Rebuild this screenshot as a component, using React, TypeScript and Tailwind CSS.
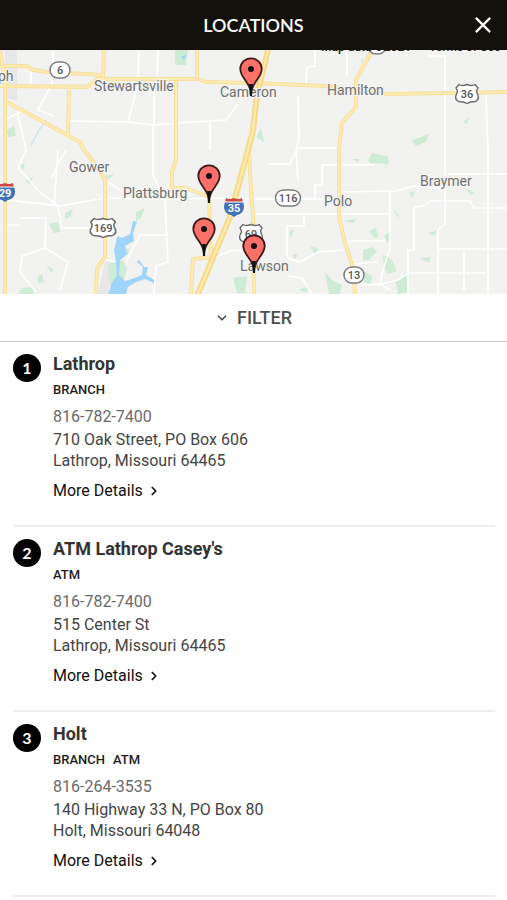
import { ChevronDown, ChevronRight } from "lucide-react";

type Location = {
  name: string;
  types: string[];
  phone: string;
  street: string;
  city: string;
};

const locations: Location[] = [
  {
    name: "Lathrop",
    types: ["BRANCH"],
    phone: "816-782-7400",
    street: "710 Oak Street, PO Box 606",
    city: "Lathrop, Missouri 64465",
  },
  {
    name: "ATM Lathrop Casey's",
    types: ["ATM"],
    phone: "816-782-7400",
    street: "515 Center St",
    city: "Lathrop, Missouri 64465",
  },
  {
    name: "Holt",
    types: ["BRANCH", "ATM"],
    phone: "816-264-3535",
    street: "140 Highway 33 N, PO Box 80",
    city: "Holt, Missouri 64048",
  },
];

const minorRoads = [
  "M139 50L138 78M158 50L157 78M53 50L52 84L38 110L54 116",
  "M138 84L128 122L70 121M128 122L154 125L176 123L226 120L238 104",
  "M154 84V125M153 125V150M210 120V150M31 72V84",
  "M17 110L26 150L18 168L40 192L58 206M58 150L54 206",
  "M8 200L60 206L105 198L165 199L240 198L253 199H330",
  "M20 218L46 218L45 248L22 256L20 272L36 292M45 248L68 262L60 290",
  "M58 206L62 228L105 228M52 178L60 160L66 150",
  "M153 150L153 175L165 200L168 262L156 266L154 294",
  "M168 235H140L126 262M115 262L100 258M130 200L120 190L105 180",
  "M216 257L232 250L253 252M253 214H390M253 199H315V185H322V165H375",
  "M298 95L299 140L296 150L298 180M298 148H340",
  "M306 84L307 67L315 66V50M347 50V76",
  "M445 56V131M428 56H445V175M445 189V224L438 230V294",
  "M486 95L488 150V294M414 207L424 206L430 201H470L474 208H507",
  "M340 192L396 191L414 186L440 188M448 174H507",
  "M414 207V250H408V294M390 192V248L383 270L380 284L390 290",
  "M304 220V214M286 226H304V216M287 226V258L300 262L318 252L343 250",
  "M346 241H385M354 264L378 262M288 276L302 278L312 294",
  "M362 285L382 284L398 280L408 273H486M464 252V291M438 249H507",
  "M5 120L20 112M5 225H20M268 164H290L295 153",
];

const majorRoads = [
  "M0 50L5 80V294",
  "M0 66H27L33 70L48 72L104 75",
  "M104 50L103 79M197 50V80",
  "M69 90L68 137",
  "M5 101L80 142L84 150L97 167L105 180V257L97 268L96 294",
  "M176 81V160L172 172V188H186L209 197M209 200L211 257L193 259L191 294",
  "M372 50L367 60L356 80V107L342 123L339 150V217L345 243L353 268L355 294",
  "M249 150L251 190L253 215L254 294",
  "M0 86L87 87L97 79H198L206 82L253 83L326 86L387 94L507 92",
];

const interstate = "M268 50L257 95L253 130L248 150L230 217L197 296";

const parks = [
  "M175 50H188L186 65H175Z",
  "M49 224L58 222L60 232L54 233Z",
  "M65 213L73 209L71 216L65 219Z",
  "M38 276L42 274L44 282L38 283ZM46 265L54 270L51 272Z",
  "M22 288L34 287L33 294H18Z",
  "M108 264L122 260L127 268L124 279L110 286Z",
  "M122 250L129 248L128 255L121 256Z",
  "M136 212L145 208L141 218L136 221Z",
  "M25 181L33 177L30 184ZM20 165L25 164L23 170Z",
  "M7 130L14 126L16 136L8 137ZM102 176L114 174L109 179Z",
  "M412 140L421 137L429 134L426 142L416 146Z",
  "M256 137L261 128L264 142Z",
  "M463 122L469 117L467 124ZM408 63L412 61ZM361 61L364 57L362 64Z",
  "M368 160L372 153L380 155L388 156L389 164L370 163Z",
  "M233 278L247 276L245 293H237Z",
  "M363 250L372 247L377 251L369 260H363Z",
  "M383 255L392 260L397 271L388 274L384 267Z",
  "M325 272L332 280L342 285L340 294H329Z",
  "M365 272L372 276L370 285L364 281ZM396 282L406 272L409 292L398 294Z",
  "M394 208L400 218L396 215ZM289 232L294 229L291 238Z",
  "M369 231L376 228L378 238L374 238ZM384 236L391 231L388 243Z",
  "M420 258L431 257L429 263ZM428 233L437 231L434 236Z",
  "M409 193L415 191L412 198ZM464 188L474 192L472 195Z",
  "M343 221L356 219L353 223ZM353 159L360 159L357 162Z",
  "M310 246L319 249L315 254ZM293 254L298 255L294 259Z",
  "M210 255L216 259L212 261ZM299 289L310 287L306 293Z",
];

const places = [
  { name: "ph", x: -2, y: 81 },
  { name: "Stewartsville", x: 94, y: 91 },
  { name: "Cameron", x: 220, y: 97 },
  { name: "Hamilton", x: 327, y: 95 },
  { name: "Gower", x: 69, y: 172 },
  { name: "Plattsburg", x: 123, y: 198 },
  { name: "Polo", x: 324, y: 206 },
  { name: "Braymer", x: 420, y: 186 },
  { name: "Lawson", x: 240, y: 271 },
];

function RouteBadge({ x, y, w, label }: { x: number; y: number; w: number; label: string }) {
  return (
    <g transform={`translate(${x} ${y})`}>
      <rect x={-w / 2} y="-8" width={w} height="16" rx="8" fill="#fff" stroke="#7d7d7d" strokeWidth="1.5" />
      <text y="4" textAnchor="middle" fontSize="11" fontWeight="500" fill="#555">
        {label}
      </text>
    </g>
  );
}

function UsShield({ x, y, w, label }: { x: number; y: number; w: number; label: string }) {
  const scale = w / 24;
  return (
    <g transform={`translate(${x} ${y})`}>
      <path
        transform={`scale(${scale} 1)`}
        d="M-8 -9.5Q-5 -7.5 0 -9.5Q5 -7.5 8 -9.5L11 -6Q8.5 -3 10.5 0Q13 5 8.5 7.5Q3 7.5 0 9.5Q-3 7.5 -8.5 7.5Q-13 5 -10.5 0Q-8.5 -3 -11 -6Z"
        fill="#fff"
        stroke="#6b6b6b"
        strokeWidth="1.4"
        strokeLinejoin="round"
      />
      <text y="4" textAnchor="middle" fontSize="11" fontWeight="500" fill="#555">
        {label}
      </text>
    </g>
  );
}

function InterstateShield({ x, y, label }: { x: number; y: number; label: string }) {
  return (
    <g transform={`translate(${x} ${y})`}>
      <path d="M-8 -9Q-4 -7 0 -9Q4 -7 8 -9L9 -4H-9Z" fill="#d0453e" />
      <path d="M-9 -5H9Q12 3 6 7Q2 8 0 10Q-2 8 -6 7Q-12 3 -9 -5Z" fill="#3f72b8" />
      <path d="M-9 -5H9" stroke="#fff" strokeWidth="1" />
      <text y="5" textAnchor="middle" fontSize="11" fontWeight="700" fill="#fff">
        {label}
      </text>
    </g>
  );
}

// x/y is the tip of the pin
function Pin({ x, y }: { x: number; y: number }) {
  return (
    <g transform={`translate(${x} ${y})`}>
      <path
        d="M0 -3C-1 -14 -10.700 -18 -10.700 -27A10.700 10.700 0 0 1 10.700 -27C10.700 -18 1 -14 0 -3Z"
        fill="#fb7068"
        stroke="#3a1a1a"
        strokeWidth="1.8"
      />
      <path d="M-1.800 -12H1.800L1 0H-1Z" fill="#111" />
      <circle cy="-27" r="3" fill="#111" />
    </g>
  );
}

function LocationsMap() {
  return (
    <svg
      role="img"
      aria-label="Map of locations"
      viewBox="0 50 507 244"
      preserveAspectRatio="xMidYMid slice"
      className="block h-[244px] w-full bg-[#f2f2f1] font-[Roboto,sans-serif]"
    >
      <path d="M5 50H17V100L5 98ZM105 262L112 262L108 294H98Z" fill="#e7e7e9" />
      {parks.map((d) => (
        <path key={d} d={d} fill="#cdebd5" />
      ))}
      <path
        d="M133 221L137 222L133 233L134 241L125 246L127 254L120 260L119 275L125 281L135 278L142 275L143 267L137 262L139 260L144 267L148 267L146 275L156 281L154 283L145 279L136 282L128 287L126 294H108L112 283L117 275L116 261L114 250L116 243L117 236L122 238L130 234Z"
        fill="#9fd5fb"
      />
      <path d="M181 57L187 54L184 60Z" fill="#9fd5fb" />
      <path d="M31 145L38 132L46 120" fill="none" stroke="#bfe0ea" strokeWidth="1" />
      <g fill="none" stroke="#fff" strokeWidth="1.6" strokeLinejoin="round">
        {minorRoads.map((d) => (
          <path key={d} d={d} />
        ))}
      </g>
      <g fill="none" stroke="#f9e09a" strokeWidth="4" strokeLinejoin="round">
        {majorRoads.map((d) => (
          <path key={d} d={d} />
        ))}
      </g>
      <g fill="none" stroke="#fdebb5" strokeWidth="2" strokeLinejoin="round">
        {majorRoads.map((d) => (
          <path key={d} d={d} />
        ))}
      </g>
      <path d={interstate} fill="none" stroke="#f7da85" strokeWidth="6" />
      <path d={interstate} fill="none" stroke="#fdebb5" strokeWidth="2" />

      <RouteBadge x={60} y={70} w={20} label="6" />
      <RouteBadge x={288} y={198} w={25} label="116" />
      <RouteBadge x={354} y={275} w={20} label="13" />
      <RouteBadge x={377} y={46} w={18} label="" />
      <UsShield x={467} y={94} w={24} label="36" />
      <UsShield x={103} y={228} w={27} label="169" />
      <UsShield x={251} y={234} w={24} label="69" />
      <InterstateShield x={5} y={192} label="29" />
      <InterstateShield x={234} y={207} label="35" />

      <g fontSize="14" fill="#6f6f6f" stroke="#f5f5f4" strokeWidth="2" paintOrder="stroke">
        {places.map((p) => (
          <text key={p.name} x={p.x} y={p.y}>
            {p.name}
          </text>
        ))}
      </g>
      <g fontSize="12" fontWeight="500" fill="#222">
        <text x="321" y="51">Map data ©2021</text>
        <text x="429" y="51">Terms of Use</text>
      </g>

      <Pin x={251} y={96} />
      <Pin x={209} y={203} />
      <Pin x={204} y={256} />
      <Pin x={254} y={273} />
    </svg>
  );
}

export default function App() {
  return (
    <div className="min-h-screen bg-white font-[Roboto,sans-serif]">
      <header className="grid h-[50px] grid-cols-[1fr_auto_1fr] items-center bg-[#14110d] px-3 text-white">
        <h1 className="col-start-2 font-[Lato,sans-serif] text-lg font-semibold">LOCATIONS</h1>
        <button type="button" aria-label="Close" className="justify-self-end p-1">
          <svg viewBox="0 0 18 18" className="size-4" fill="none" stroke="currentColor" strokeWidth="2.5">
            <path d="M1 1L17 17M17 1L1 17" />
          </svg>
        </button>
      </header>

      <LocationsMap />

      <button
        type="button"
        className="flex h-12 w-full items-center justify-center gap-2 border-b border-[#c4c8c8] text-lg font-medium text-[#4f4f4f]"
      >
        <ChevronDown className="size-3.5" strokeWidth={3} />
        FILTER
      </button>

      <ul className="pr-3 pl-[13px]">
        {locations.map((location, i) => (
          <li key={location.name} className="flex gap-3 border-b-2 border-[#eeeeee] pt-2.5 pb-[22px]">
            <span className="mt-0.5 flex size-7 shrink-0 items-center justify-center rounded-full bg-black font-[Lato,sans-serif] text-base font-bold text-white">
              {i + 1}
            </span>
            <div className="text-base leading-[21px] text-[#444]">
              <h2 className="text-lg leading-6 font-bold text-[#333]">{location.name}</h2>
              <p className="mt-1 flex gap-2 text-[13px] leading-5 font-medium text-[#1c1c1c]">
                {location.types.map((type) => (
                  <span key={type}>{type}</span>
                ))}
              </p>
              <a href={`tel:${location.phone}`} className="mt-[5px] block leading-6 text-[#6a6a6a]">
                {location.phone}
              </a>
              <p>{location.street}</p>
              <p>{location.city}</p>
              <a href="#" className="mt-2 flex items-center gap-1 leading-6 text-[#111]">
                More Details
                <ChevronRight className="size-3.5" strokeWidth={3} />
              </a>
            </div>
          </li>
        ))}
      </ul>
    </div>
  );
}
